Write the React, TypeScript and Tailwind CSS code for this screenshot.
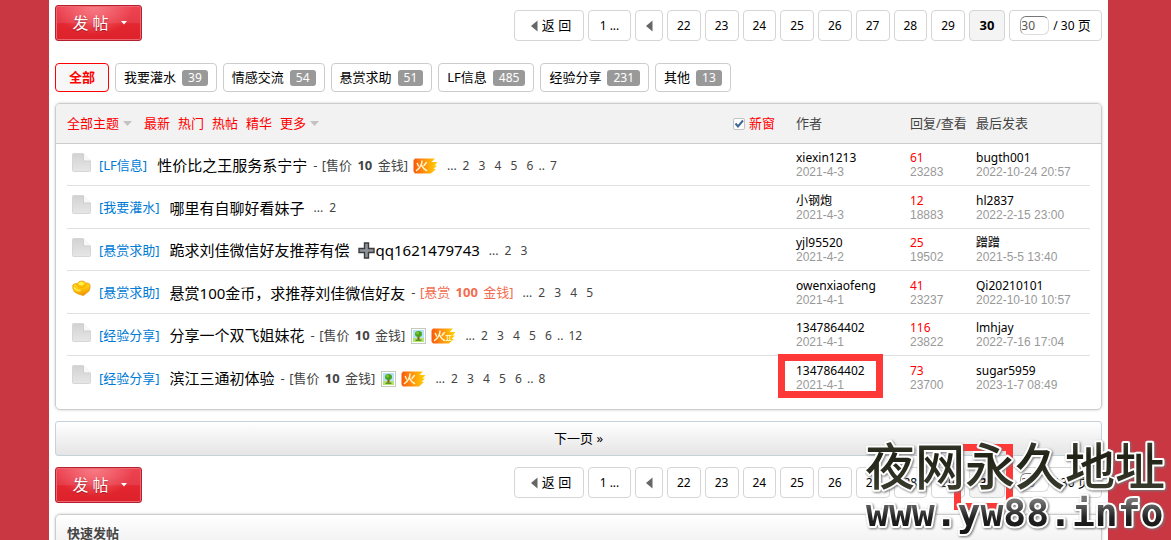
import React from "react";

const PAGES = [22, 23, 24, 25, 26, 27, 28, 29];

const FILTERS = [
  { name: "我要灌水", count: 39 },
  { name: "情感交流", count: 54 },
  { name: "悬赏求助", count: 51 },
  { name: "LF信息", count: 485 },
  { name: "经验分享", count: 231 },
  { name: "其他", count: 13 },
];

type Thread = {
  kind: "page" | "gold";
  category: string;
  title: string;
  extra?: string;
  tag?: { label: string; amount: number; reward?: boolean };
  image?: boolean;
  heat?: 1 | 2;
  pages: number[];
  last?: number;
  author: string;
  date: string;
  replies: number;
  views: number;
  lastBy: string;
  lastAt: string;
  marked?: boolean;
};

const THREADS: Thread[] = [
  { kind: "page", category: "LF信息", title: "性价比之王服务系宁宁", tag: { label: "售价", amount: 10 }, heat: 1, pages: [2, 3, 4, 5, 6], last: 7, author: "xiexin1213", date: "2021-4-3", replies: 61, views: 23283, lastBy: "bugth001", lastAt: "2022-10-24 20:57" },
  { kind: "page", category: "我要灌水", title: "哪里有自聊好看妹子", pages: [2], author: "小钢炮", date: "2021-4-3", replies: 12, views: 18883, lastBy: "hl2837", lastAt: "2022-2-15 23:00" },
  { kind: "page", category: "悬赏求助", title: "跪求刘佳微信好友推荐有偿", extra: "qq1621479743", pages: [2, 3], author: "yjl95520", date: "2021-4-2", replies: 25, views: 19502, lastBy: "蹭蹭", lastAt: "2021-5-5 13:40" },
  { kind: "gold", category: "悬赏求助", title: "悬赏100金币，求推荐刘佳微信好友", tag: { label: "悬赏", amount: 100, reward: true }, pages: [2, 3, 4, 5], author: "owenxiaofeng", date: "2021-4-1", replies: 41, views: 23237, lastBy: "Qi20210101", lastAt: "2022-10-10 10:57" },
  { kind: "page", category: "经验分享", title: "分享一个双飞姐妹花", tag: { label: "售价", amount: 10 }, image: true, heat: 2, pages: [2, 3, 4, 5, 6], last: 12, author: "1347864402", date: "2021-4-1", replies: 116, views: 23822, lastBy: "lmhjay", lastAt: "2022-7-16 17:04" },
  { kind: "page", category: "经验分享", title: "滨江三通初体验", tag: { label: "售价", amount: 10 }, image: true, heat: 1, pages: [2, 3, 4, 5, 6], last: 8, author: "1347864402", date: "2021-4-1", replies: 73, views: 23700, lastBy: "sugar5959", lastAt: "2023-1-7 08:49", marked: true },
];

function PageIcon() {
  return (
    <svg width="19" height="19" viewBox="0 0 19 19" className="block">
      <defs>
        <linearGradient id="sheet" x1="0" y1="0" x2="0" y2="1">
          <stop offset="0" stopColor="#d2d2d2" />
          <stop offset="1" stopColor="#e6e6e6" />
        </linearGradient>
      </defs>
      <path d="M1.5 .5H11.5L18.500 7.500V17.500Q18.500 18.500 17.500 18.500H1.500Q.5 18.500 .5 17.500V1.500Q.5.5 1.500.5Z" fill="url(#sheet)" stroke="#d6d6d6" />
      <path d="M11.500 0L19 7.500V8H11.500Z" fill="#f8f8f8" />
      <path d="M11.500 1V8H18.500" fill="none" stroke="#cfcfcf" />
    </svg>
  );
}

function GoldIcon() {
  return (
    <svg width="19" height="17" viewBox="0 0 19 17" className="block">
      <defs>
        <linearGradient id="gold" x1=".3" y1="0" x2=".6" y2="1">
          <stop offset="0" stopColor="#ffd91c" />
          <stop offset=".55" stopColor="#ffc60c" />
          <stop offset="1" stopColor="#ee8c00" />
        </linearGradient>
      </defs>
      <path d="M.8 5Q2.500 3.200 5.500 3.500Q6.500 1 9.500 1Q12.500 1 13.800 3Q16.500 2.500 18 4.500Q18.600 8 17 11L11.500 15.500Q6 14.500 2.500 12Q.2 9 .8 5Z" fill="url(#gold)" stroke="#eb9a0c" strokeWidth=".8" />
      <path d="M5 4Q5.500 7.500 9.500 7.500Q13.500 7.300 14 3.500" fill="none" stroke="#f3a400" />
      <ellipse cx="9.300" cy="3.500" rx="2.800" ry="1.600" fill="#fff34c" />
      <path d="M2 7.500Q4.500 11 8.500 10.500" fill="none" stroke="#ffe94a" strokeWidth="1.300" />
    </svg>
  );
}

function ImageIcon() {
  return (
    <svg width="15" height="16" viewBox="0 0 15 16" className="block shrink-0">
      <rect x=".5" y=".5" width="14" height="15" fill="#fff" stroke="#c6c9bd" />
      <rect x="2" y="2" width="11" height="8" fill="#b5e2fb" />
      <rect x="2" y="10" width="11" height="4" fill="#b5e36f" />
      <rect x="6.500" y="8" width="2" height="4" fill="#8b5a16" />
      <rect x="4.500" y="11.500" width="6" height="1.500" fill="#5c9a20" />
      <ellipse cx="7.500" cy="6" rx="3.500" ry="3" fill="#4ba31a" />
      <circle cx="6.500" cy="5" r="1.500" fill="#7cc636" />
    </svg>
  );
}

function HeatIcon({ level }: { level: 1 | 2 }) {
  return (
    <svg width="25" height="16" viewBox="0 0 25 16" className="block shrink-0">
      <defs>
        <linearGradient id="heat" x1="0" y1="0" x2="1" y2="0">
          <stop offset="0" stopColor="#f8590c" />
          <stop offset=".45" stopColor="#ff9212" />
          <stop offset="1" stopColor="#ffd500" />
        </linearGradient>
      </defs>
      <path d="M2 .5H22L18.500 4H24.500L21.500 7.500H24L20.500 11H23L18 15.500H2L.5 13.500V2.500Z" fill="url(#heat)" />
      <path d="M9 3Q9 8.500 3.500 12.500M8.700 7.500Q10 10.500 13.500 12.500M4.300 5.500L5.500 8M13.300 4.500L11 7.500" fill="none" stroke="#fff8c8" strokeWidth="1.500" strokeLinecap="round" />
      {level === 2 && <path d="M14.500 7.500H20.500M14.500 12.500H20.500M16.300 7.500V12.500M18.700 7.500V12.500" fill="none" stroke="#fff3c0" />}
    </svg>
  );
}

function PlusIcon() {
  return (
    <svg width="17" height="17" viewBox="0 0 17 17" className="block shrink-0">
      <path d="M6.500 1H10.500V6.500H16V10.500H10.500V16H6.500V10.500H1V6.500H6.500Z" fill="#8d959b" stroke="#3c3c3c" strokeWidth="1.400" />
    </svg>
  );
}

function DownArrow() {
  return (
    <svg width="9" height="5" viewBox="0 0 9 5" className="block">
      <path d="M0 0H9L4.500 5Z" fill="#c3c3c3" />
    </svg>
  );
}

function LeftArrow() {
  return (
    <svg width="7" height="12" viewBox="0 0 7 12" className="block">
      <path d="M0 6L6.500 .5V11.500Z" fill="#666" />
    </svg>
  );
}

function PostButton() {
  return (
    <button
      type="button"
      className="flex h-9 w-[87px] items-center justify-center gap-3 rounded-[3px] border border-[#b5202e] bg-[radial-gradient(ellipse_at_45%_0%,#f77e87_0%,transparent_60%),linear-gradient(#ef4352_0%,#e53a47_50%,#e4262f_52%,#dc222b_100%)] pl-[2px] text-[16px] text-white shadow-[inset_0_0_0_1px_#ee6670]"
    >
      <span className="[text-shadow:0_1px_1px_#a01520]">发 帖</span>
      <svg width="6" height="4" viewBox="0 0 6 4">
        <path d="M0 0H6L3 3.500Z" fill="#fff" />
      </svg>
    </button>
  );
}

const pagerBox = "flex h-[31px] items-center justify-center rounded border border-[#d5d5d5] bg-white";

function Pager({ id, marked }: { id: string; marked?: boolean }) {
  return (
    <nav className="flex gap-1 text-[12px] text-black" aria-label="分页">
      <a href="#back" className={`${pagerBox} w-[70px] gap-1 pl-1 text-[13px]`}>
        <LeftArrow />
        返 回
      </a>
      <a href="#p1" className={`${pagerBox} w-[43px]`}>1 ...</a>
      <a href="#prev" aria-label="上一页" className={`${pagerBox} w-7`}>
        <LeftArrow />
      </a>
      <div className="flex w-[298px] gap-1">
        {PAGES.map((p) => (
          <a key={p} href={`#p${p}`} className={`${pagerBox} flex-1`}>{p}</a>
        ))}
      </div>
      <strong className="relative flex h-[31px] w-9 items-center justify-center rounded border border-[#d5d5d5] bg-[#f4f4f4] text-[13px]">
        30
        {marked && <span className="absolute -left-4 -top-6 h-[66px] w-[59px] border-[7px] border-[#ff3838]" />}
      </strong>
      <label htmlFor={id} className={`${pagerBox} w-[93px] gap-1`}>
        <input
          id={id}
          aria-label="页码"
          defaultValue="30"
          className="h-[19px] w-[29px] rounded-[6px] border border-[#ddd] border-l-[#999] border-t-[#777] bg-white text-[12px] text-[#555]"
        />
        <span>/ 30 <span className="text-[13px]">页</span></span>
      </label>
    </nav>
  );
}

function Watermark() {
  return (
    <svg width="306" height="102" viewBox="0 0 306 102" className="absolute bottom-0 right-0 z-20">
      <defs>
        <linearGradient id="ink" x1="0" y1="0" x2="0" y2="1">
          <stop offset="0" stopColor="#55584a" />
          <stop offset=".4" stopColor="#202216" />
          <stop offset="1" stopColor="#3f4133" />
        </linearGradient>
        <linearGradient id="steel" x1="0" y1="0" x2="0" y2="1">
          <stop offset=".2" stopColor="#777" />
          <stop offset=".6" stopColor="#222" />
          <stop offset="1" stopColor="#111" />
        </linearGradient>
      </defs>
      <g stroke="#fff" strokeWidth="4" strokeLinejoin="round" paintOrder="stroke" className="drop-shadow-[1px_1px_1px_#777]">
        <text x="0" y="47" fontSize="50" fontWeight="500" fill="url(#ink)" className="font-['Noto_Sans_CJK_SC',sans-serif]">夜网永久地址</text>
        <text x="1" y="88" fontSize="38" fontWeight="700" fill="url(#steel)" className="font-['DejaVu_Sans_Mono',monospace]">www.yw88.info</text>
      </g>
    </svg>
  );
}

function ThreadRow({ t, end }: { t: Thread; end: boolean }) {
  const line = end ? "" : "border-b border-[#e0e0e0]";
  return (
    <tr>
      <td />
      <td className={`${line} pl-[5px] align-top`}>
        <div className="pt-[9px]">{t.kind === "gold" ? <GoldIcon /> : <PageIcon />}</div>
      </td>
      <td className={`${line} pt-[2px]`} colSpan={2}>
        <div className="flex items-center whitespace-nowrap text-[13px] text-[#444]">
          <a href="#category" className="mr-[10px] text-[#007bd5]">[{t.category}]</a>
          <a href="#thread" className="flex items-center text-[15px] text-black">
            {t.title}
            {t.extra && <span className="ml-2 flex items-center gap-px"><PlusIcon />{t.extra}</span>}
          </a>
          {t.tag && (
            <span className="ml-[6px]">
              - <span className={t.tag.reward ? "ml-px text-[#f26c4f]" : "ml-px"}>[{t.tag.label} <b className="mx-[2px]">{t.tag.amount}</b> 金钱]</span>
            </span>
          )}
          {t.image && <span className="ml-[6px]"><ImageIcon /></span>}
          {t.heat && <span className="ml-[5px]"><HeatIcon level={t.heat} /></span>}
          <span className="ml-[9px] flex text-[12px]">
            <span className="mr-[6px]">...</span>
            {t.pages.map((p) => (
              <a key={p} href={`#t${p}`} className="w-4">{p}</a>
            ))}
            {t.last && <span className="-ml-1 flex gap-[5px]"><span>..</span><a href={`#t${t.last}`}>{t.last}</a></span>}
          </span>
        </div>
      </td>
      <td className={line}>
        <div className="relative">
          <a href="#author" className="block text-[12px] leading-[15px] text-black">{t.author}</a>
          <span className="block font-['Liberation_Sans',sans-serif] text-[12px] leading-[14px] text-[#999]">{t.date}</span>
          {t.marked && <span className="absolute -left-[18px] -top-[9px] h-[44px] w-[105px] border-[7px] border-[#ff3838]" />}
        </div>
      </td>
      <td className={line}>
        <a href="#replies" className="block text-[12px] leading-[15px] text-[#f00]">{t.replies}</a>
        <span className="block font-['Liberation_Sans',sans-serif] text-[12px] leading-[14px] text-[#999]">{t.views}</span>
      </td>
      <td className={line}>
        <a href="#last" className="block text-[12px] leading-[15px] text-black">{t.lastBy}</a>
        <span className="block font-['Liberation_Sans',sans-serif] text-[12px] leading-[14px] text-[#999]">{t.lastAt}</span>
      </td>
      <td />
    </tr>
  );
}

export default function App() {
  return (
    <div className="relative h-screen overflow-hidden bg-[#c93743] pl-[49px] pr-[63px] font-['Noto_Sans','Noto_Sans_CJK_SC',sans-serif] text-[13px] text-[#444]">
      <main className="min-h-full bg-white px-[6px] pt-[5px]">
        <div className="flex items-start justify-between">
          <PostButton />
          <div className="pt-[5px]"><Pager id="page-top" /></div>
        </div>

        <div className="mt-[22px] flex gap-[6px] text-black">
          <a href="#all" className="flex h-[29px] w-[54px] items-center justify-center rounded border border-[#f00] bg-[#f7f7f7] font-bold text-[#f00]">全部</a>
          {FILTERS.map((f) => (
            <a key={f.name} href="#filter" className="flex h-[29px] items-center gap-[6px] rounded border border-[#ccc] bg-white px-2">
              {f.name}
              <span className="rounded-[3px] bg-[#999] px-[6px] text-[12px] leading-4 text-white">{f.count}</span>
            </a>
          ))}
        </div>

        <section className="mt-[11px] rounded-[5px] border border-[#ccc] pb-[10px] shadow-[0_0_3px_#ccc]">
          <table className="w-full table-fixed border-separate border-spacing-0">
            <colgroup>
              <col className="w-[11px]" />
              <col className="w-8" />
              <col />
              <col className="w-[63px]" />
              <col className="w-[114px]" />
              <col className="w-[66px]" />
              <col className="w-[114px]" />
              <col className="w-[11px]" />
            </colgroup>
            <thead>
              <tr className="h-10 text-left [&>*]:border-b [&>*]:border-[#ccc] [&>*]:bg-[#f2f2f2] [&>*]:font-normal">
                <td className="rounded-tl" />
                <th colSpan={2}>
                  <div className="flex items-center gap-2 text-[#f00]">
                    <a href="#topics" className="mr-1 flex items-center gap-1">全部主题<DownArrow /></a>
                    <a href="#new">最新</a>
                    <a href="#hot">热门</a>
                    <a href="#hot-posts">热帖</a>
                    <a href="#digest">精华</a>
                    <a href="#more" className="flex items-center gap-1">更多<DownArrow /></a>
                  </div>
                </th>
                <th>
                  <div className="flex items-center gap-1 text-[#f00]">
                    <span className="grid">
                      <input
                        id="new-window"
                        type="checkbox"
                        defaultChecked
                        className="peer col-start-1 row-start-1 h-3 w-3 appearance-none rounded-[2px] border border-[#c4c4c4] bg-white"
                      />
                      <svg width="12" height="12" viewBox="0 0 12 12" aria-hidden="true" className="pointer-events-none invisible col-start-1 row-start-1 peer-checked:visible">
                        <path d="M2.500 5.500L5 8.500L10 2.500" fill="none" stroke="#3f6797" strokeWidth="2" />
                      </svg>
                    </span>
                    <label htmlFor="new-window">新窗</label>
                  </div>
                </th>
                <th>作者</th>
                <th className="whitespace-nowrap">回复/查看</th>
                <th>最后发表</th>
                <td className="rounded-tr" />
              </tr>
            </thead>
            <tbody className="[&>tr:nth-child(even)]:h-[43px] [&>tr:nth-child(odd)]:h-[42px]">
              {THREADS.map((t, i) => (
                <ThreadRow key={t.title} t={t} end={i === THREADS.length - 1} />
              ))}
            </tbody>
          </table>
        </section>

        <a href="#next" className="mt-[11px] flex h-[35px] items-center justify-center rounded-[3px] border border-[#c6d2da] bg-linear-to-b from-white to-[#e5e5e5] text-black">
          下一页 »
        </a>

        <div className="mt-[11px] flex items-start justify-between">
          <PostButton />
          <Pager id="page-bottom" marked />
        </div>

        <section className="mt-[11px] rounded-t-[5px] border border-[#ccc] bg-linear-to-b from-white to-[#eee] px-[11px] shadow-[0_0_3px_#ccc]">
          <h2 className="font-bold leading-9">快速发帖</h2>
        </section>
      </main>
      <Watermark />
    </div>
  );
}
